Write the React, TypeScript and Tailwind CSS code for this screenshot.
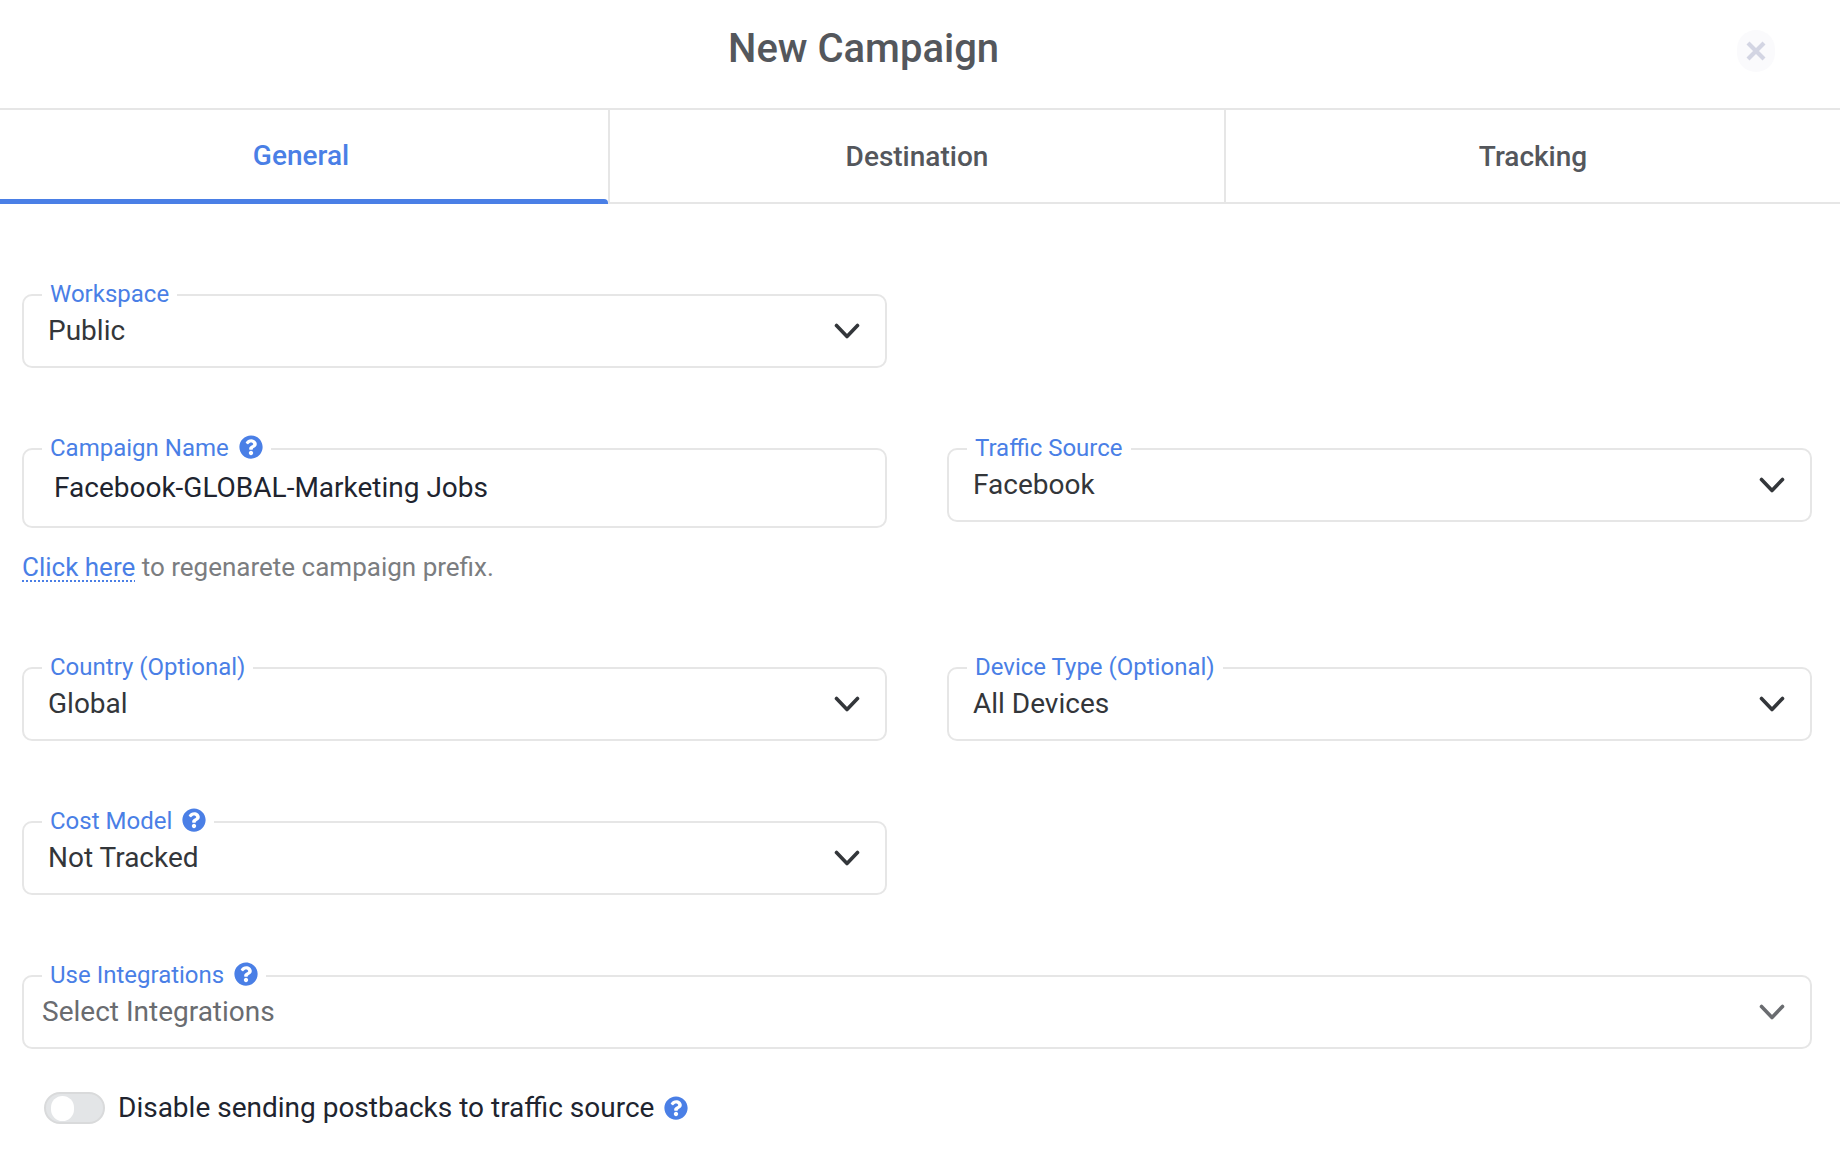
import { ReactNode } from "react";
import { FaQuestionCircle } from "react-icons/fa";

function Chevron({ color = "#33363a" }: { color?: string }) {
  return (
    <svg width="26" height="17" viewBox="0 0 26 17" fill="none" className="shrink-0">
      <path d="M2.5 2.5 L13 13.5 L23.5 2.5" stroke={color} strokeWidth="3.6" strokeLinecap="round" strokeLinejoin="round" />
    </svg>
  );
}

function FieldLabel({ text, help }: { text: string; help?: boolean }) {
  return (
    <span className="absolute left-[18px] top-[-18px] flex h-[32px] items-center gap-[10px] bg-white px-[8px] text-[24px] text-[#4a7fe6]">
      {text}
      {help && <FaQuestionCircle className="-mt-[2px] text-[24px] text-[#4a7fe6]" />}
    </span>
  );
}

function Field({ label, help, height = "h-[74px]", children }: { label: string; help?: boolean; height?: string; children: ReactNode }) {
  return (
    <div className={`relative flex ${height} items-center rounded-[10px] border-2 border-[#e6e6e6] bg-white`}>
      <FieldLabel text={label} help={help} />
      {children}
    </div>
  );
}

function SelectField({ label, value, help }: { label: string; value: string; help?: boolean }) {
  return (
    <Field label={label} help={help}>
      <div className="flex w-full items-center justify-between pl-[24px] pr-[25px] text-[28px] text-[#33363a]">
        <span className="-mt-[1px]">{value}</span>
        <Chevron />
      </div>
    </Field>
  );
}

export default function App() {
  return (
    <div className="h-[1160px] w-[1840px] overflow-hidden bg-white font-['Roboto',sans-serif]">
      <header className="flex h-[110px] items-center border-b-2 border-[#e6e6e6] pb-[10px] pl-[728px] pr-[65px]">
        <h1 className="text-[40px] font-medium text-[#54575c]">New Campaign</h1>
        <button className="ml-auto mt-[4px] flex h-[42px] w-[38px] items-center justify-center rounded-full bg-[#fafafc]">
          <svg width="22" height="22" viewBox="0 0 22 22" fill="none">
            <path d="M3 3 L19 19 M19 3 L3 19" stroke="#d3d5e3" strokeWidth="4.2" />
          </svg>
        </button>
      </header>

      <nav className="flex h-[94px] border-b-2 border-[#e6e6e6] text-[28px] font-medium text-[#54575c]">
        <div className="-mb-[2px] flex h-[94px] w-[608px] flex-col text-[#4a7fe6]">
          <div className="flex flex-1 items-center justify-center pr-[6px] pt-[3px]">General</div>
          <div className="h-[5px] rounded-tr-[4px] bg-[#4a7fe6]" />
        </div>
        <div className="flex w-[616px] items-center justify-center border-l-2 border-[#e6e6e6] pt-[2px]">Destination</div>
        <div className="flex flex-1 items-center justify-center border-l-2 border-[#e6e6e6] pt-[2px]">Tracking</div>
      </nav>

      <main className="flex flex-col gap-[80px] pl-[22px] pr-[28px] pt-[90px]">
        <div className="grid grid-cols-[865px_865px] gap-x-[60px]">
          <SelectField label="Workspace" value="Public" />
        </div>

        <div className="grid grid-cols-[865px_865px] gap-x-[60px]">
          <div>
            <Field label="Campaign Name" help height="h-[80px]">
              <span className="pl-[30px] text-[28px] text-[#20242f]">Facebook-GLOBAL-Marketing Jobs</span>
            </Field>
            <p className="mt-[21px] h-[38px] text-[26px] leading-[37px] text-[#7b7d80]">
              <a className="text-[#4a7fe6] underline decoration-dotted decoration-2 underline-offset-[4px]">Click here</a> to regenarete campaign prefix.
            </p>
          </div>
          <div>
            <SelectField label="Traffic Source" value="Facebook" />
          </div>
        </div>

        <div className="grid grid-cols-[865px_865px] gap-x-[60px]">
          <SelectField label="Country (Optional)" value="Global" />
          <SelectField label="Device Type (Optional)" value="All Devices" />
        </div>

        <div className="grid grid-cols-[865px_865px] gap-x-[60px]">
          <SelectField label="Cost Model" value="Not Tracked" help />
        </div>

        <Field label="Use Integrations" help>
          <div className="flex w-full items-center justify-between pl-[18px] pr-[25px] text-[28px] text-[#6a6c70]">
            <span className="-mt-[1px]">Select Integrations</span>
            <Chevron color="#6a6c70" />
          </div>
        </Field>
      </main>

      <div className="ml-[44px] mt-[38px] flex items-center">
        <div className="flex h-[32px] w-[61px] items-center rounded-full border-2 border-[#d9dadb] bg-[#e3e5e7] pl-[5px]">
          <div className="h-[25px] w-[23px] rounded-full bg-white" />
        </div>
        <span className="ml-[13px] text-[28px] text-[#20242f]">Disable sending postbacks to traffic source</span>
        <FaQuestionCircle className="ml-[10px] text-[24px] text-[#4a7fe6]" />
      </div>
    </div>
  );
}
